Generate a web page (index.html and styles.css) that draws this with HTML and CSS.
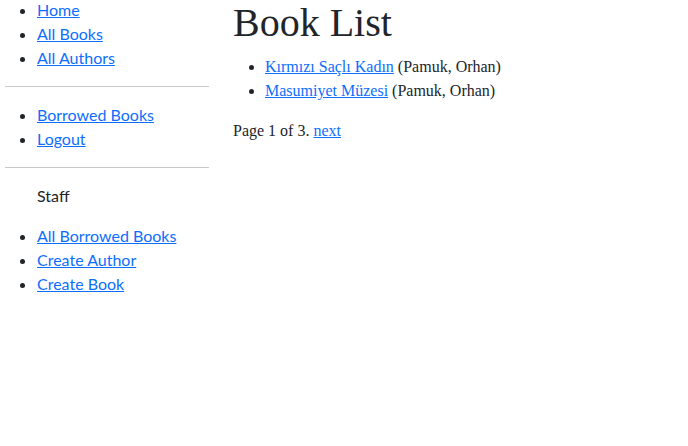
FILE: index.html
```html
<!DOCTYPE html>
<html lang="en">
<head>
<meta charset="utf-8">
<title>Local Library</title>
<link rel="stylesheet" href="styles.css">
</head>
<body>
<div class="page">
  <nav class="sidebar">
    <ul class="nav-list">
      <li><a href="#">Home</a></li>
      <li><a href="#">All Books</a></li>
      <li><a href="#">All Authors</a></li>
    </ul>
    <hr class="rule">
    <ul class="nav-list">
      <li><a href="#">Borrowed Books</a></li>
      <li><a href="#">Logout</a></li>
    </ul>
    <hr class="rule">
    <p class="section-label">Staff</p>
    <ul class="nav-list">
      <li><a href="#">All Borrowed Books</a></li>
      <li><a href="#">Create Author</a></li>
      <li><a href="#">Create Book</a></li>
    </ul>
  </nav>
  <main class="content">
    <h1 class="title">Book List</h1>
    <ul class="book-list">
      <li><a href="#">Kırmızı Saçlı Kadın</a> (Pamuk, Orhan)</li>
      <li><a href="#">Masumiyet Müzesi</a> (Pamuk, Orhan)</li>
    </ul>
    <p class="pager">Page 1 of 3. <a href="#">next</a></p>
  </main>
</div>
</body>
</html>
```

FILE: styles.css
```css
html, body {
  margin: 0;
  padding: 0;
  background: #ffffff;
  color: #212529;
}

a {
  color: #0d6efd;
  text-decoration: underline;
}

.page {
  display: grid;
  grid-template-columns: 204px 1fr;
  column-gap: 24px;
  padding-left: 5px;
  margin-top: -2px;
}

.sidebar {
  font-family: "Lato", "Liberation Sans", sans-serif;
  font-size: 16px;
  line-height: 24px;
}

.nav-list {
  margin: 0 0 16px 0;
  padding-left: 32px;
}

.rule {
  margin: 0 0 16px 0;
  border: 0;
  border-top: 1px solid #c8c9ca;
  height: 0;
}

.section-label {
  margin: 0 0 16px 0;
  padding-left: 32px;
}

.content {
  font-family: "Liberation Serif", "Times New Roman", serif;
  font-size: 16px;
  line-height: 24px;
  padding-top: 1px;
}

.title {
  margin: 0 0 8px 0;
  font-size: 40px;
  font-weight: 400;
  line-height: 48px;
}

.book-list {
  margin: 0 0 16px 0;
  padding-left: 32px;
}

.pager {
  margin: 0;
}
```
